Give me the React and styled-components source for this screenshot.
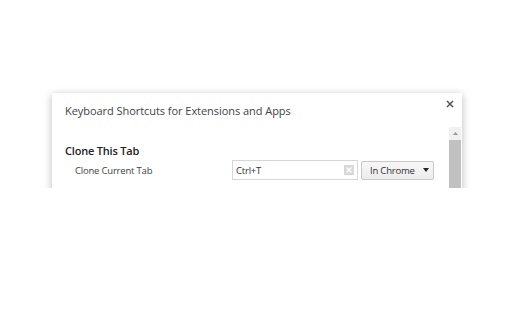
import React from "react";
import styled, { createGlobalStyle } from "styled-components";

const Global = createGlobalStyle`
  html, body { margin: 0; padding: 0; background: #fff; }
  body { font-family: "Open Sans", "Noto Sans", sans-serif; }
`;

const Stage = styled.div`
  height: 188px;
  overflow: hidden;
  padding: 93px 0 0 52px;
  box-sizing: border-box;
`;

const Dialog = styled.div`
  width: 410px;
  height: 200px;
  background: #fff;
  box-shadow: 0 2px 8px rgba(0, 0, 0, 0.28);
  display: flex;
  flex-direction: column;
`;

const Header = styled.div`
  height: 34px;
  display: flex;
  align-items: flex-start;
  justify-content: space-between;
  padding: 0 0 0 13px;
`;

const Title = styled.div`
  font-size: 11px;
  line-height: 15px;
  letter-spacing: -0.05px;
  color: #444;
  margin-top: 10px;
  white-space: nowrap;
`;

const Close = styled.div`
  width: 14px;
  height: 14px;
  margin: 4px 5px 0 0;
  display: flex;
  align-items: center;
  justify-content: center;
`;

const Body = styled.div`
  flex: 1;
  display: flex;
`;

const Content = styled.div`
  flex: 1;
  padding: 16px 0 0 13px;
`;

const Scrollbar = styled.div`
  width: 12px;
  margin-right: 1px;
  background: #f1f1f1;
  display: flex;
  flex-direction: column;
`;

const ArrowUp = styled.div`
  height: 13px;
  display: flex;
  align-items: center;
  justify-content: center;
`;

const Thumb = styled.div`
  flex: 1;
  background: #c1c1c1;
`;

const SectionTitle = styled.div`
  font-size: 11px;
  font-weight: 600;
  letter-spacing: -0.2px;
  color: #222;
  line-height: 15px;
  white-space: nowrap;
`;

const Row = styled.div`
  display: flex;
  align-items: center;
  margin-top: 2px;
`;

const Label = styled.div`
  width: 157px;
  padding-left: 10px;
  font-size: 9.5px;
  letter-spacing: -0.2px;
  color: #444;
  white-space: nowrap;
`;

const Input = styled.div`
  width: 118px;
  height: 18px;
  border: 1px solid #d6d6d6;
  display: flex;
  align-items: center;
  justify-content: space-between;
  padding: 0 3px 0 3px;
  font-size: 9.5px;
  letter-spacing: -0.2px;
  color: #333;
  box-sizing: content-box;
`;

const ClearBtn = styled.div`
  width: 10px;
  height: 10px;
  background: #d8d8d8;
  display: flex;
  align-items: center;
  justify-content: center;
`;

const Select = styled.div`
  margin-left: 3px;
  width: 73px;
  height: 19px;
  border: 1px solid #c8c8c8;
  border-radius: 2px;
  background: linear-gradient(#f7f7f7, #ececec);
  display: flex;
  align-items: center;
  justify-content: space-between;
  padding: 0 4px 0 8px;
  box-sizing: border-box;
  font-size: 9.5px;
  letter-spacing: -0.2px;
  color: #333;
  white-space: nowrap;
`;

export default function App() {
  return (
    <>
      <Global />
      <Stage>
        <Dialog>
          <Header>
            <Title>Keyboard Shortcuts for Extensions and Apps</Title>
            <Close>
              <svg width="8" height="8" viewBox="0 0 8 8">
                <path d="M1 1L7 7M7 1L1 7" stroke="#555" strokeWidth="1.5" />
              </svg>
            </Close>
          </Header>
          <Body>
            <Content>
              <SectionTitle>Clone This Tab</SectionTitle>
              <Row>
                <Label>Clone Current Tab</Label>
                <Input>
                  <span>Ctrl+T</span>
                  <ClearBtn>
                    <svg width="6" height="6" viewBox="0 0 6 6">
                      <path d="M0.5 0.5L5.5 5.5M5.5 0.5L0.5 5.5" stroke="#fff" strokeWidth="1.3" />
                    </svg>
                  </ClearBtn>
                </Input>
                <Select>
                  <span>In Chrome</span>
                  <svg width="6" height="4" viewBox="0 0 6 4">
                    <path d="M0 0H6L3 4Z" fill="#222" />
                  </svg>
                </Select>
              </Row>
            </Content>
            <Scrollbar>
              <ArrowUp>
                <svg width="5" height="3" viewBox="0 0 5 3">
                  <path d="M0 3H5L2.5 0Z" fill="#999" />
                </svg>
              </ArrowUp>
              <Thumb />
            </Scrollbar>
          </Body>
        </Dialog>
      </Stage>
    </>
  );
}
